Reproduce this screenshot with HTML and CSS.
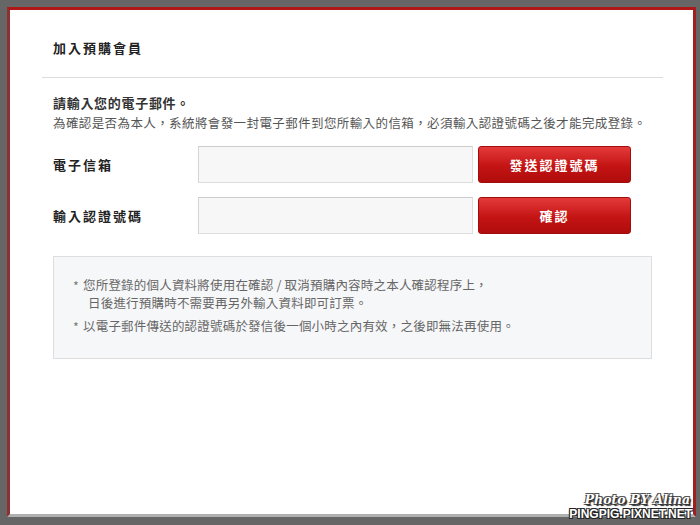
FILE: index.html
```html
<!DOCTYPE html>
<html lang="zh-Hant">
<head>
    <meta charset="UTF-8">
    <meta name="viewport" content="width=device-width, initial-scale=1.0">
    <title>加入預購會員</title>
    <link rel="stylesheet" href="styles.css">
</head>
<body>
    <div class="frame">
        <div class="panel">
            <div class="panel-head">
                <h1>加入預購會員</h1>
            </div>
            <div class="panel-body">
                <p class="lead">請輸入您的電子郵件。</p>
                <p class="desc">為確認是否為本人，系統將會發一封電子郵件到您所輸入的信箱，必須輸入認證號碼之後才能完成登錄。</p>

                <form class="verify-form">
                    <div class="row">
                        <label for="email">電子信箱</label>
                        <input type="text" id="email" name="email">
                        <button type="button">發送認證號碼</button>
                    </div>
                    <div class="row">
                        <label for="code">輸入認證號碼</label>
                        <input type="text" id="code" name="code">
                        <button type="button">確認</button>
                    </div>
                </form>

                <ul class="notice">
                    <li>您所登錄的個人資料將使用在確認 / 取消預購內容時之本人確認程序上，<span class="cont">日後進行預購時不需要再另外輸入資料即可訂票。</span></li>
                    <li>以電子郵件傳送的認證號碼於發信後一個小時之內有效，之後即無法再使用。</li>
                </ul>
            </div>
        </div>
    </div>
    <div class="watermark">
        <span class="wm-script">Photo BY Alina</span>
        <span class="wm-site">PINGPIG.PIXNET.NET</span>
    </div>
</body>
</html>
```

FILE: styles.css
```css
html, body {
    height: 100%;
}
body {
    margin: 0;
    padding: 7px 4px 8px 7px;
    box-sizing: border-box;
    background-color: #666;
    font-family: "Noto Sans CJK TC", "Noto Sans", Arial, sans-serif;
    color: #333;
}
.frame {
    height: 100%;
    box-sizing: border-box;
    background-color: #fff;
    border-style: solid;
    border-width: 3px;
    border-color: #b01818 #a02020 #b0b0b0 #8c3030;
}
.panel {
    margin: 0 30px 0 32px;
}
.panel-head {
    padding: 28px 11px 19px;
    border-bottom: 1px solid #dcdcdc;
}
h1 {
    margin: 0;
    font-size: 13px;
    line-height: 20px;
    font-weight: bold;
    letter-spacing: 2px;
    color: #222;
}
.panel-body {
    padding: 14px 11px 0;
}
.lead {
    margin: 0;
    font-size: 13px;
    line-height: 21px;
    font-weight: bold;
    letter-spacing: 0.7px;
    color: #333;
}
.desc {
    margin: 0;
    font-size: 12.5px;
    line-height: 20px;
    color: #555;
    letter-spacing: 0.4px;
}
.verify-form {
    margin-top: 13px;
    display: flex;
    flex-direction: column;
    gap: 14px;
}
.row {
    display: flex;
    align-items: center;
}
.row label {
    width: 145px;
    font-size: 13px;
    font-weight: bold;
    letter-spacing: 2px;
    color: #222;
}
.row input {
    width: 275px;
    height: 37px;
    box-sizing: border-box;
    margin: 0 5px 0 0;
    border: 1px solid #dedede;
    border-top-color: #cccccc;
    border-left-color: #d4d4d4;
    background-color: #f7f7f7;
    font-size: 13px;
    padding: 0 8px;
}
.row button {
    width: 153px;
    height: 37px;
    border: 1px solid #a10d0d;
    border-radius: 3px;
    background: linear-gradient(#e43a3a, #c41414 55%, #b00c0c);
    color: #fff;
    font-family: inherit;
    font-size: 13px;
    font-weight: bold;
    letter-spacing: 2px;
    cursor: pointer;
}
.notice {
    list-style: none;
    margin: 22px 0 0;
    padding: 19px 19px 23px;
    width: 599px;
    box-sizing: border-box;
    background-color: #f6f7f9;
    border: 1px solid #dedede;
    display: flex;
    flex-direction: column;
    gap: 5px;
}
.notice li {
    position: relative;
    padding-left: 10px;
    font-size: 12.5px;
    line-height: 18px;
    color: #666;
    letter-spacing: 0.2px;
}
.notice li::before {
    content: "*";
    position: absolute;
    left: 0;
    top: 1px;
    color: #777;
}
.notice .cont {
    display: block;
    padding-left: 5px;
}
.watermark {
    position: absolute;
    right: 8px;
    bottom: 5px;
    display: flex;
    flex-direction: column;
    align-items: flex-end;
    color: #fff;
    line-height: 1;
}
.wm-script {
    font-family: "DejaVu Serif", serif;
    font-style: italic;
    font-weight: bold;
    font-size: 12.5px;
    margin-right: 2px;
    text-shadow: 1px 1px 0 #333, -1px -1px 0 #555, 1px -1px 0 #555, -1px 1px 0 #555, 2px 2px 1px #222;
}
.wm-site {
    font-family: "Liberation Sans", Arial, sans-serif;
    font-weight: bold;
    font-size: 12px;
    margin-top: 2px;
    text-shadow: 1px 1px 0 #222, -1px -1px 0 #222, 1px -1px 0 #222, -1px 1px 0 #222;
}
```
